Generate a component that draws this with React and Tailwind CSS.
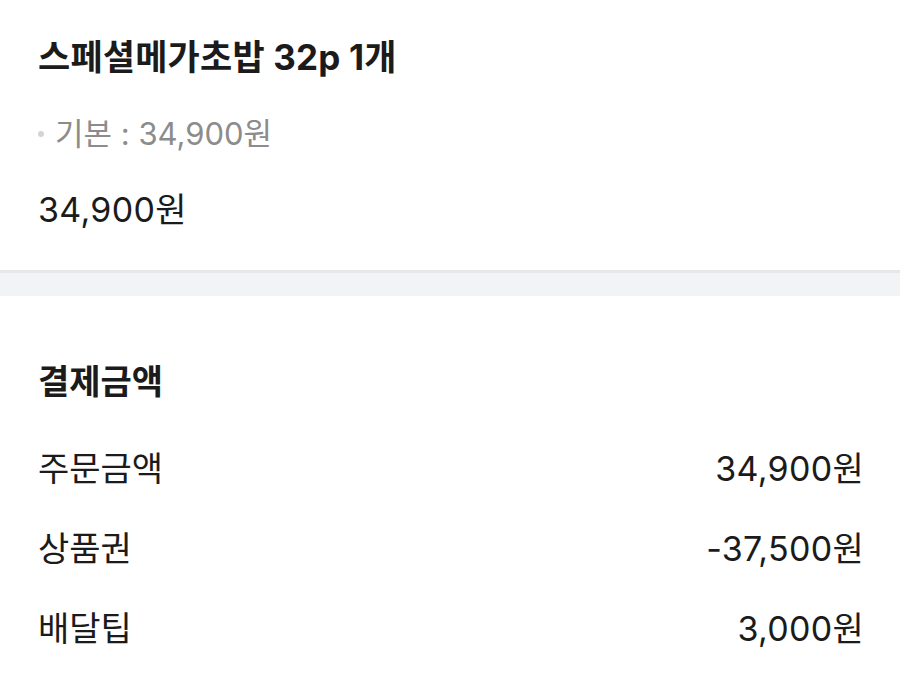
export default function App() {
    const rows = [
        {label: '주문금액', value: '34,900원'},
        {label: '상품권', value: '-37,500원'},
        {label: '배달팁', value: '3,000원'},
    ]

    return (
        <div className="min-h-[688px] w-[900px] bg-white text-[#1b1b1b] font-['Inter','Noto_Sans_CJK_KR',sans-serif]">
            <section className="px-[38px] pt-[37px] pb-[40px]">
                <h1 className="text-[35px] font-bold leading-[40px] tracking-[0.2px]">스페셜메가초밥 32p 1개</h1>
                <div className="mt-[37px] flex items-center gap-[11px] text-[#8c8c8c]">
                    <span className="size-[6px] rounded-full bg-[#d4d4d4]"/>
                    <span className="text-[31px] leading-[40px]">기본 : 34,900원</span>
                </div>
                <p className="mt-[36px] text-[34px] leading-[40px] tracking-[0.3px]">34,900원</p>
            </section>

            <div className="h-[3px] bg-[#e6e7ea]"/>
            <div className="h-[23px] bg-[#f2f3f5]"/>

            <section className="pl-[38px] pr-[36px] pt-[66px]">
                <h2 className="text-[34px] font-bold leading-[40px]">결제금액</h2>
                <div className="mt-[47px] flex flex-col gap-[40px]">
                    {rows.map((r) => (
                        <div key={r.label} className="flex items-center justify-between text-[34px] leading-[40px]">
                            <span>{r.label}</span>
                            <span className="tracking-[0.3px]">{r.value}</span>
                        </div>
                    ))}
                </div>
            </section>
        </div>
    )
}
